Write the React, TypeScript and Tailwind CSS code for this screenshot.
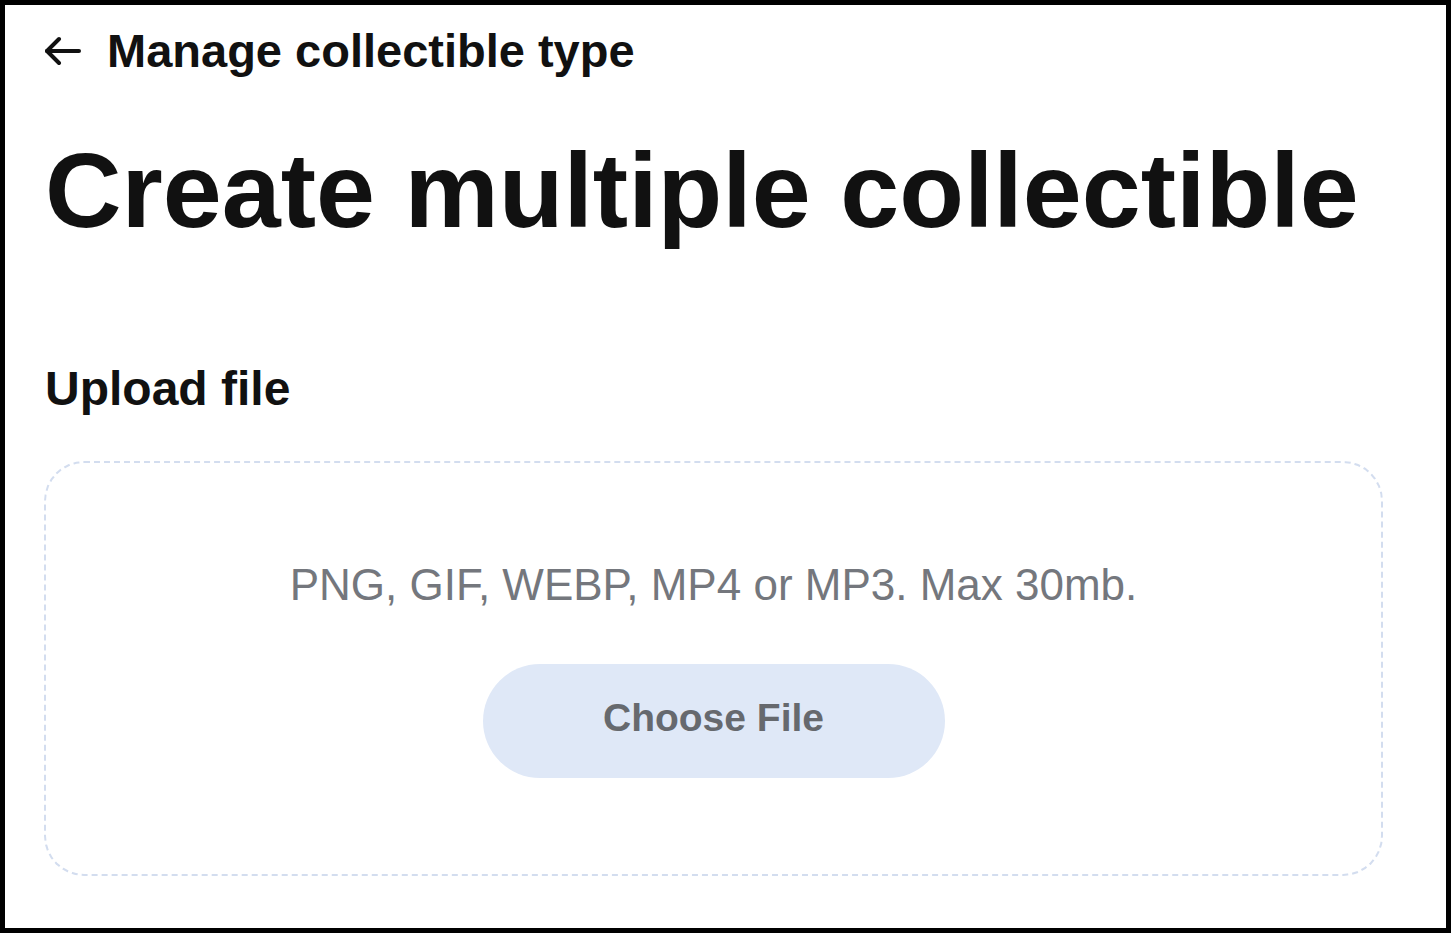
import React from 'react';

/** Back arrow drawn to match the thin chevron-headed arrow in the header. */
function BackArrow() {
  return (
    <svg width="36" height="32" viewBox="0 0 36 32" fill="none" stroke="#111" strokeWidth="4" strokeLinecap="round" strokeLinejoin="round">
      <path d="M2 16h32" />
      <path d="M14 4 2 16l12 12" />
    </svg>
  );
}

export default function App() {
  return (
    <div className="w-[1451px] h-[933px] border-[5px] border-black bg-white pl-[40px] pt-[22px] font-['Liberation_Sans',Arial,sans-serif] text-[#111]">
      {/* back link */}
      <div className="flex items-center gap-[26px]">
        <BackArrow />
        <span className="text-[47px] font-bold leading-none">Manage collectible type</span>
      </div>

      <h1 className="mt-[63px] text-[106px] font-bold leading-none">Create multiple collectible</h1>

      <h2 className="mt-[122px] text-[48px] font-bold leading-none">Upload file</h2>

      {/* drop zone */}
      <div className="mt-[48px] -ml-[1px] w-[1339px] h-[415px] rounded-[40px] border-2 border-dashed border-[#d3ddef] flex flex-col items-center pt-[100px]">
        <p className="text-[44px] leading-none text-[#74777d]">PNG, GIF, WEBP, MP4 or MP3. Max 30mb.</p>
        <button className="mt-[57px] w-[462px] h-[114px] rounded-full bg-[#dfe8f7] pb-[6px] text-[39px] font-bold text-[#66696e]">
          Choose File
        </button>
      </div>
    </div>
  );
}
